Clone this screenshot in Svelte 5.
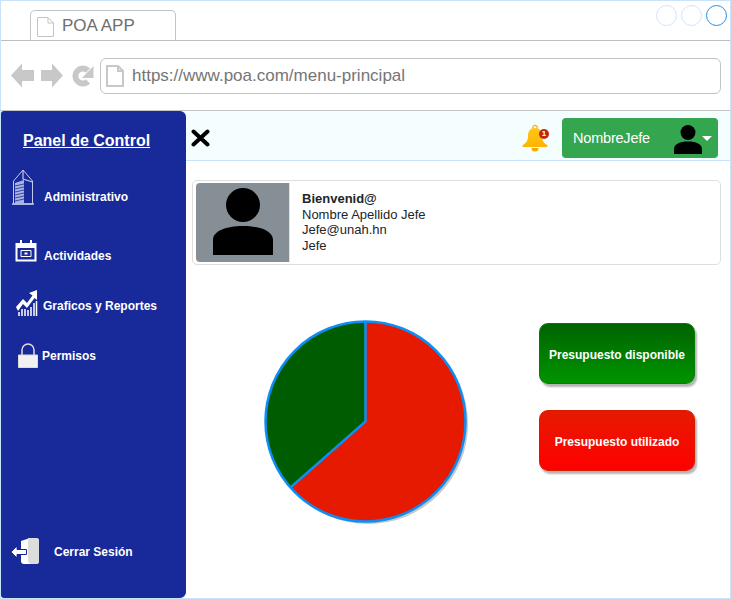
<script>
  const menu = [
    { id: 'admin', label: 'Administrativo' },
    { id: 'act', label: 'Actividades' },
    { id: 'graf', label: 'Graficos y Reportes' },
    { id: 'perm', label: 'Permisos' }
  ];
</script>

<div class="window">
  <header class="tabbar">
    <div class="tab">
      <svg class="doc" width="17" height="20" viewBox="0 0 17 20"><path d="M.5.5h10.500l5.500 5.500v13.500h-16z M11 .5v5.500h5.500" fill="#fff" stroke="#c4c4c4"/></svg>
      <span>POA APP</span>
    </div>
    <div class="dots"><i></i><i></i><i class="on"></i></div>
  </header>

  <div class="addr">
    <div class="navs">
      <svg width="23" height="25" viewBox="0 0 23 25"><path d="M0 12.500 11 .5v6.500h12v11H11v6.500z" fill="#c8c8c8"/></svg>
      <svg width="22" height="25" viewBox="0 0 22 25"><path d="M22 12.500 11 .5v6.500H0v11h11v6.500z" fill="#c8c8c8"/></svg>
      <svg width="22" height="24" viewBox="0 0 22 24"><path d="M16 17.500a7.500 7.500 0 1 1 0-11" fill="none" stroke="#c8c8c8" stroke-width="6"/><path d="M21.500 2v12H10z" fill="#c8c8c8"/></svg>
    </div>
    <div class="url">
      <svg width="18" height="22" viewBox="0 0 18 22"><path d="M1 1h11l5 5v15H1z M12 1v5h5" fill="#fff" stroke="#c8c8c8" stroke-width="2"/></svg>
      <span>https://www.poa.com/menu-principal</span>
    </div>
  </div>

  <div class="body">
    <aside class="side">
      <h1>Panel de Control</h1>
      <nav>
        {#each menu as m}
          <div class="item {m.id}">
            {#if m.id === 'admin'}
              <svg width="22" height="36" viewBox="0 0 22 36"><path d="M1.500 35V12L11 1l9.500 11v23z" fill="none" stroke="#c3c9ea" stroke-width="1"/><path d="M11 1v9l9.500 3" fill="none" stroke="#c3c9ea" stroke-width="1.200"/><path d="M3 14l9-3v23H3z" fill="#aab2de"/><path d="M3 17l9-2M3 20l9-2M3 23l9-2M3 26l9-2M3 29l9-2M3 32l9-2" stroke="#1b2c9a" stroke-width=".8"/><path d="M0 35h22" stroke="#c3c9ea" stroke-width="1.500"/></svg>
            {:else if m.id === 'act'}
              <svg width="22" height="22" viewBox="0 0 22 22"><path d="M1.500 4h19v16.500h-19z" fill="none" stroke="#fff" stroke-width="2"/><path d="M1 4h20v4H1z" fill="#fff"/><path d="M5 0h2v4H5zM15 0h2v4h-2z" fill="#fff"/><path d="M6 10.500h10v6H6z" fill="none" stroke="#fff"/><path d="M9.500 12.500h3v2h-3z" fill="#fff"/></svg>
            {:else if m.id === 'graf'}
              <svg width="22" height="26" viewBox="0 0 22 26"><path d="M0 17 7 9l4 4 5.500-7.500L13 3l8-3v10l-2.500-2-7.500 10-4-4-5 7z" fill="#fff"/><path d="M3 26v-4M6 26v-7M9 26v-7M12 26v-6M15 26v-9M18 26v-13M20.500 26v-15" stroke="#fff" stroke-width="1.500"/></svg>
            {:else}
              <svg width="20" height="25" viewBox="0 0 20 25"><path d="M4 12V7a6 6 0 0 1 12 0v5" fill="none" stroke="#dcdcdc" stroke-width="1.500"/><path d="M.5 12h19v12.500H.5z" fill="#f2f2f2" stroke="#dcdcdc"/></svg>
            {/if}
            <span>{m.label}</span>
          </div>
        {/each}
      </nav>
      <div class="logout">
        <svg width="28" height="27" viewBox="0 0 28 27"><path d="M10 4 19 1h6q3 0 3 3v20q0 3-3 3H13q-3 0-3-3z" fill="#fff"/><path d="M17 1h8q3 0 3 3v20q0 3-3 3h-5q-3-1-3-3z" fill="#dcdcdc"/><path d="M0 15l6-6v3.500h9.500v5H6V21z" fill="#fff" stroke="#18299a"/></svg>
        <span>Cerrar Sesión</span>
      </div>
    </aside>

    <main class="main">
      <div class="top">
        <svg class="x" width="19" height="18" viewBox="0 0 19 18"><path d="M2.500 2.500l14 13M16.500 2.500l-14 13" stroke="#000" stroke-width="4" stroke-linecap="round"/></svg>
        <div class="bell">
          <svg width="28" height="30" viewBox="0 0 28 30"><defs><linearGradient id="b" x1="0" y1="0" x2="0" y2="1"><stop offset="0" stop-color="#ffc61a"/><stop offset="1" stop-color="#ffb300"/></linearGradient></defs><circle cx="13" cy="3.500" r="2.200" fill="none" stroke="#f6b40e" stroke-width="1.300"/><path d="M13 4c-5 0-7 3.500-7 8 0 5-2 7-5 9-1.500 1 0 2 1 2h22c1 0 2.500-1 1-2-3-2-5-4-5-9 0-4.500-2-8-7-8z" fill="url(#b)"/><path d="M9.500 24h7a3.500 3.500 0 0 1-7 0z" fill="#f6a800"/></svg>
          <b>1</b>
        </div>
        <button class="user">
          <span class="name">NombreJefe</span>
          <svg width="28" height="29" viewBox="0 0 28 29"><circle cx="14" cy="7.500" r="7.500"/><path d="M0 29v-5c0-5 6-7.500 14-7.500s14 2.500 14 7.500v5z"/></svg>
          <i class="caret"></i>
        </button>
      </div>

      <div class="content">
        <section class="card">
          <div class="photo">
            <svg width="60" height="67" viewBox="0 0 60 67"><circle cx="30" cy="17" r="17"/><path d="M0 67V52c0-9 13-14 30-14s30 5 30 14v15z"/></svg>
          </div>
          <div class="info">
            <strong>Bienvenid@</strong>
            <span>Nombre Apellido Jefe</span>
            <span>Jefe@unah.hn</span>
            <span>Jefe</span>
          </div>
        </section>

        <div class="stats">
          <svg class="pie" width="210" height="210" viewBox="0 0 210 210">
            <circle cx="105" cy="105" r="100" fill="#c8c8c8"/>
            <circle cx="102.500" cy="102.500" r="100" fill="#e61a00"/>
            <path d="M102.500 102.500V2.500A100 100 0 0 0 27.500 168.500z" fill="#005c00"/>
            <g fill="none" stroke="#0d8ef5" stroke-width="2.500">
              <circle cx="102.500" cy="102.500" r="100"/>
              <path d="M102.500 2.500v100L27.500 168.500"/>
            </g>
          </svg>
          <div class="legend">
            <div class="pill green">Presupuesto disponible</div>
            <div class="pill red">Presupuesto utilizado</div>
          </div>
        </div>
      </div>
    </main>
  </div>
</div>

<style>
  :global(body) { margin: 0; background: #fff; }
  .window {
    width: 731px; height: 599px; box-sizing: border-box;
    border: 1px solid #c9e3fb; display: flex; flex-direction: column;
    font-family: "Liberation Sans", Arial, sans-serif; overflow: hidden; background: #fff;
  }
  .tabbar {
    height: 40px; flex: none; box-sizing: border-box; border-bottom: 1px solid #bdbdbd;
    display: flex; justify-content: space-between; padding: 9px 3px 0 29px;
  }
  .tab {
    width: 146px; height: 30px; box-sizing: border-box; border: 1px solid #c4c4c4; border-bottom: none;
    border-radius: 5px 5px 0 0; background: #fff; display: flex; align-items: flex-start; gap: 8px; padding: 6px 0 0 6px;
    font-size: 17px; color: #6e6e6e; line-height: 18px;
  }
  .tab .doc { flex: none; }
  .dots { display: flex; gap: 4px; margin-top: -5px; height: 21px; }
  .dots i { width: 21px; height: 21px; box-sizing: border-box; border: 1px solid #cfe5fb; border-radius: 50%; display: block; }
  .dots i.on { border-color: #1e90f0; }
  .addr {
    height: 70px; flex: none; box-sizing: border-box; border-bottom: 1px solid #c4c4c4;
    display: flex; align-items: center; padding: 0 9px 0 10px; gap: 5px;
  }
  .navs { display: flex; gap: 7px; align-items: center; width: 84px; flex: none; }
  .navs svg:last-child { margin-left: 2px; }
  .url {
    flex: 1; height: 36px; box-sizing: border-box; border: 1px solid #c4c4c4; border-radius: 6px;
    display: flex; align-items: center; gap: 8px; padding-left: 5px; font-size: 17px; color: #757575;
  }
  .body { flex: 1; display: flex; min-height: 0; }
  .side {
    width: 185px; flex: none; background: #18299a; border-radius: 3px 6px 6px 3px; color: #fff;
    display: flex; flex-direction: column; box-sizing: border-box; padding: 19px 0 34px;
  }
  h1 { margin: 0 0 0 22px; font-size: 16px; line-height: 22px; font-weight: 700; text-decoration: underline; }
  nav { display: flex; flex-direction: column; flex: 1; margin-top: 17px; }
  .item { display: flex; align-items: center; font-size: 12px; font-weight: 700; }
  .item.admin { height: 36px; padding-left: 11px; gap: 10px; }
  .item.admin span { margin-top: 20px; }
  .item.act { height: 22px; margin-top: 35px; padding-left: 14px; gap: 7px; }
  .item.act span { margin-top: 10px; }
  .item.graf { height: 26px; margin-top: 28px; padding-left: 15px; gap: 5px; }
  .item.graf span { margin-top: 6px; }
  .item.perm { height: 25px; margin-top: 27px; padding-left: 17px; gap: 4px; }
  .logout { display: flex; align-items: center; gap: 15px; padding-left: 10px; font-size: 12px; font-weight: 700; }
  .logout span { margin-top: 3px; }
  .main { flex: 1; display: flex; flex-direction: column; min-width: 0; }
  .top {
    height: 50px; flex: none; box-sizing: border-box; background: #f5feff; border-bottom: 1px solid #c9e3fb;
    display: flex; align-items: center; padding: 5px 12px 0 5px;
  }
  .x { flex: none; }
  .bell { margin-left: auto; position: relative; width: 28px; height: 30px; margin-right: 12px; margin-top: 1px; }
  .bell svg { display: block; }
  .bell b {
    position: absolute; left: 17px; top: 5px; width: 10px; height: 10px; border-radius: 50%;
    background: #c1270b; color: #fff; font-size: 8px; line-height: 10px; text-align: center;
  }
  .user {
    width: 156px; height: 40px; margin: 0; border: none; border-radius: 4px; background: #34a650; color: #fff;
    display: flex; align-items: center; font: 14.500px "Liberation Sans", Arial, sans-serif; padding: 0 6px 0 11px;
  }
  .user .name { flex: 1; text-align: left; letter-spacing: -0.2px; }
  .user svg { flex: none; fill: #000; margin-top: 2px; }
  .caret { width: 0; height: 0; border: 5px solid transparent; border-top: 5px solid #fff; border-bottom: none; }
  .content { flex: 1; padding: 19px 9px 0 6px; display: flex; flex-direction: column; min-height: 0; }
  .card {
    height: 85px; box-sizing: border-box; border: 1px solid #dedede; border-radius: 5px; padding: 2px 3px;
    display: flex;
  }
  .photo {
    width: 94px; flex: none; background: #868e96; border-radius: 4px 0 0 4px; border-right: 1px solid #e0e0e0;
    display: flex; justify-content: center; align-items: flex-end; padding-bottom: 7px; box-sizing: border-box;
  }
  .info {
    display: flex; flex-direction: column; padding: 8px 0 0 12px; font-size: 13px; line-height: 15.500px; color: #212529;
  }
  .stats { display: flex; padding: 54px 0 0 71px; }
  .pie { display: block; flex: none; }
  .legend { display: flex; flex-direction: column; gap: 26px; margin: 4px 0 0 66px; }
  .pill {
    width: 156px; height: 61px; box-sizing: border-box; border-radius: 9px; color: #fff; font-size: 12px; font-weight: 700;
    display: flex; align-items: center; justify-content: center; padding-top: 2px; box-shadow: 2px 3px 2px #b5b5b5;
  }
  .green { background: linear-gradient(#006400, #009400); border: 1px solid #0a7a0a; }
  .red { background: linear-gradient(#e61a00, #ff0000); border: 1px solid #d81a00; }
</style>
